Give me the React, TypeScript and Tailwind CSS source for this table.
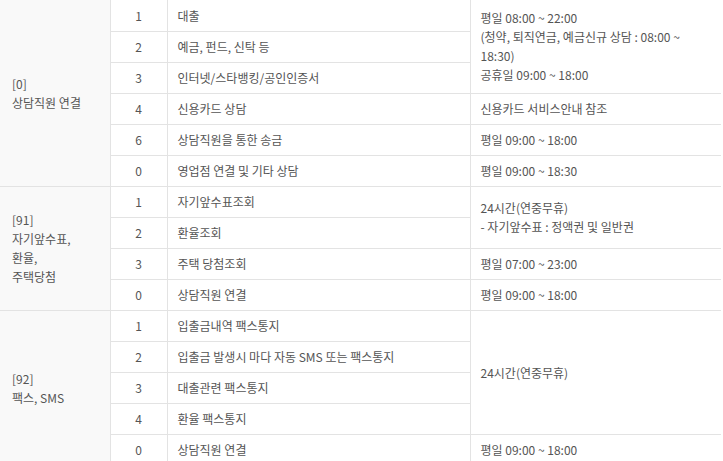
import React from 'react';

type Row = { no: string; desc: string; time?: React.ReactNode; span?: number };

interface Section {
    title: React.ReactNode;
    rows: Row[];
}

const sections: Section[] = [
    {
        title: <>[0]<br />상담직원 연결</>,
        rows: [
            {
                no: '1',
                desc: '대출',
                span: 3,
                time: (
                    <>
                        평일 08:00 ~ 22:00<br />
                        (청약, 퇴직연금, 예금신규 상담 : 08:00 ~<br />
                        18:30)<br />
                        공휴일 09:00 ~ 18:00
                    </>
                ),
            },
            { no: '2', desc: '예금, 펀드, 신탁 등' },
            { no: '3', desc: '인터넷/스타뱅킹/공인인증서' },
            { no: '4', desc: '신용카드 상담', time: '신용카드 서비스안내 참조' },
            { no: '6', desc: '상담직원을 통한 송금', time: '평일 09:00 ~ 18:00' },
            { no: '0', desc: '영업점 연결 및 기타 상담', time: '평일 09:00 ~ 18:30' },
        ],
    },
    {
        title: <>[91]<br />자기앞수표,<br />환율,<br />주택당첨</>,
        rows: [
            {
                no: '1',
                desc: '자기앞수표조회',
                span: 2,
                time: <>24시간(연중무휴)<br />- 자기앞수표 : 정액권 및 일반권</>,
            },
            { no: '2', desc: '환율조회' },
            { no: '3', desc: '주택 당첨조회', time: '평일 07:00 ~ 23:00' },
            { no: '0', desc: '상담직원 연결', time: '평일 09:00 ~ 18:00' },
        ],
    },
    {
        title: <>[92]<br />팩스, SMS</>,
        rows: [
            { no: '1', desc: '입출금내역 팩스통지', span: 4, time: '24시간(연중무휴)' },
            { no: '2', desc: '입출금 발생시 마다 자동 SMS 또는 팩스통지' },
            { no: '3', desc: '대출관련 팩스통지' },
            { no: '4', desc: '환율 팩스통지' },
            { no: '0', desc: '상담직원 연결', time: '평일 09:00 ~ 18:00' },
        ],
    },
];

const cell = "border-b border-[#e3e3e3] align-middle";

export default function App() {
    return (
        <div className="bg-white w-[723px] h-[461px] overflow-hidden font-['Noto_Sans_CJK_KR','Noto_Sans',sans-serif] text-[12px] leading-[19px] text-[#555]">
            <table className="w-[721px] table-fixed border-collapse">
                <colgroup>
                    <col className="w-[110px]" />
                    <col className="w-[57px]" />
                    <col className="w-[303px]" />
                    <col className="w-[251px]" />
                </colgroup>
                <tbody>
                    {sections.map((sec, si) =>
                        sec.rows.map((row, ri) => (
                            <tr key={`${si}-${ri}`} className="h-[31px]">
                                {ri === 0 && (
                                    <td
                                        rowSpan={sec.rows.length}
                                        className={`${cell} border-r bg-[#f9f9f9] pl-3`}
                                    >
                                        {sec.title}
                                    </td>
                                )}
                                <td className={`${cell} border-r text-center`}>{row.no}</td>
                                <td className={`${cell} border-r pl-[10px] whitespace-nowrap`}>{row.desc}</td>
                                {row.time !== undefined && (
                                    <td rowSpan={row.span ?? 1} className={`${cell} pl-[10px] whitespace-nowrap`}>
                                        {row.time}
                                    </td>
                                )}
                            </tr>
                        ))
                    )}
                </tbody>
            </table>
        </div>
    );
}
